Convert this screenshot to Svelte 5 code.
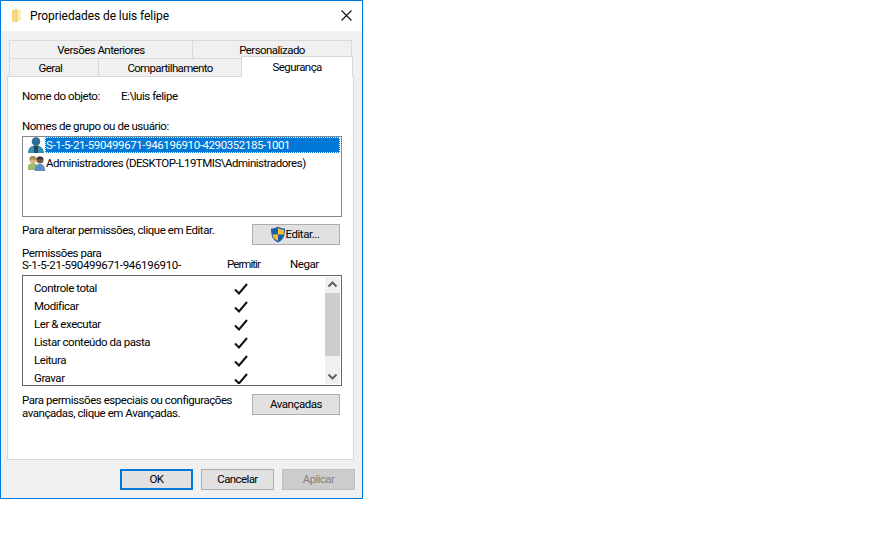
<script>
	const upper = ['Versões Anteriores', 'Personalizado']
	const perms = ['Controle total', 'Modificar', 'Ler & executar', 'Listar conteúdo da pasta', 'Leitura', 'Gravar']
</script>

<div class="window">
	<header class="title">
		<svg class="folder" width="16" height="16" viewBox="0 0 16 16">
			<path d="M2 2h2l1-1h2v13H3l-1-1z" fill="#f5d882" />
			<path d="M7 2h4v10l-4 2z" fill="#fdecb8" />
			<path d="M7 1v13" stroke="#ecca6c" stroke-width=".7" />
		</svg>
		<span>Propriedades de luis felipe</span>
		<svg class="close" width="11" height="11" viewBox="0 0 11 11">
			<path d="M.5.5l10 10M10.500.5l-10 10" stroke="#111" stroke-width="1.1" fill="none" />
		</svg>
	</header>

	<main class="body">
		<div class="tabs">
			<div class="tab-row back">
				{#each upper as t}
					<div class="tab">{t}</div>
				{/each}
			</div>
			<div class="tab-row front">
				<div class="tab geral">Geral</div>
				<div class="tab share">Compartilhamento</div>
				<div class="tab active">Segurança</div>
			</div>
		</div>

		<section class="panel">
			<div class="object">
				<span class="obj-label">Nome do objeto:</span>
				<span>E:\luis felipe</span>
			</div>

			<div class="group-label">Nomes de grupo ou de usuário:</div>
			<div class="listbox">
				<div class="user">
					<svg width="17" height="16" viewBox="0 0 17 16">
						<path d="M0 16c0-4 2-6.500 4.500-7h6c3 .5 5.500 3 5.500 7z" fill="#3a8db0" />
						<circle cx="8" cy="4.500" r="4.300" fill="#2c6f93" />
						<path d="M5.500 8.500h5L9.500 16h-3z" fill="#1c4a66" />
					</svg>
					<span class="name selected">S-1-5-21-590499671-946196910-4290352185-1001</span>
				</div>
				<div class="user">
					<svg width="17" height="16" viewBox="0 0 17 16">
						<circle cx="5" cy="4.500" r="3.600" fill="#d8b078" />
						<path d="M5 1c-2.500 0-3.500 1.500-3.500 3.500h7C8.500 2.500 7.500 1 5 1z" fill="#a88a52" />
						<path d="M-1 15c0-4 2-7 6-7s5 3 5 7z" fill="#9cbb6c" />
						<circle cx="12" cy="5" r="3.500" fill="#7a5a42" />
						<path d="M12 1.500c-2.200 0-3.500 1.200-3.500 3h7c0-1.800-1.300-3-3.500-3z" fill="#3d3a3a" />
						<path d="M6.500 16c0-4.500 2-7 5.500-7s5 2.500 5 7z" fill="#5b8dc2" />
					</svg>
					<span class="name admins">Administradores (DESKTOP-L19TMIS\Administradores)</span>
				</div>
			</div>

			<div class="action-row edit">
				<span class="hint">Para alterar permissões, clique em Editar.</span>
				<button class="btn side shielded">
					<svg width="16" height="17" viewBox="0 0 16 17">
						<path d="M8 .5c2 1.500 4.500 2 7 2 0 7-1.500 11.500-7 14-5.500-2.500-7-7-7-14 2.500 0 5-.5 7-2z" fill="#1b5fa8" />
						<path d="M8 2v6.500h5.600c.2-1.500.3-3 .2-4.700C11.800 3.700 9.700 3.200 8 2zM8 8.500H2.500C3 11.500 5 13.700 8 15z" fill="#f9c12e" />
					</svg>
					<span>Editar...</span>
				</button>
			</div>

			<div class="perm-head">
				<div class="perm-for">Permissões para<br /><span class="sid">S-1-5-21-590499671-946196910-</span></div>
				<span class="allow">Permitir</span>
				<span class="deny">Negar</span>
			</div>

			<div class="permbox">
				<div class="perm-list">
					{#each perms as p}
						<div class="perm">
							<span class="perm-name">{p}</span>
							<svg class="check" width="14" height="12" viewBox="0 0 14 12">
								<path d="M1 6.500l4 4L13 1" stroke="#111" stroke-width="2" fill="none" />
							</svg>
						</div>
					{/each}
				</div>
				<div class="scroll">
					<svg class="arrow" width="15" height="16" viewBox="0 0 15 16">
						<path d="M3.500 9.500l4-4 4 4" stroke="#606060" stroke-width="2" fill="none" />
					</svg>
					<div class="thumb"></div>
					<svg class="arrow" width="15" height="16" viewBox="0 0 15 16">
						<path d="M3.500 6.500l4 4 4-4" stroke="#606060" stroke-width="2" fill="none" />
					</svg>
				</div>
			</div>

			<div class="action-row adv">
				<span class="hint">Para permissões especiais ou configurações<br />avançadas, clique em Avançadas.</span>
				<button class="btn side">Avançadas</button>
			</div>
		</section>

		<footer class="footer">
			<button class="btn dlg default">OK</button>
			<button class="btn dlg">Cancelar</button>
			<button class="btn dlg off">Aplicar</button>
		</footer>
	</main>
</div>

<style>
	:global(body) {
		background: #fff;
	}
	.window {
		box-sizing: border-box;
		width: 363px;
		height: 499px;
		border: 1px solid #0078d7;
		display: flex;
		flex-direction: column;
		font: 11.5px/13px Roboto, "Liberation Sans", sans-serif;
		letter-spacing: -0.45px;
		color: #000;
	}
	.title {
		height: 30px;
		flex: none;
		display: flex;
		align-items: center;
		padding: 0 10px 0 9px;
		background: #fff;
		gap: 4px;
		font-size: 12px;
		letter-spacing: -0.08px;
	}
	.title span {
		flex: 1;
	}
	.close {
		margin-top: -1px;
	}
	.body {
		flex: 1;
		background: #f0f0f0;
		display: flex;
		flex-direction: column;
		padding: 9px 6px 0;
	}
	.tabs {
		margin-left: 2px;
		width: 343px;
		flex: none;
	}
	.tab-row {
		display: flex;
		height: 18px;
	}
	.tab {
		box-sizing: border-box;
		border: 1px solid #d9d9d9;
		border-bottom: 0;
		background: #f0f0f0;
		text-align: center;
		line-height: 19px;
		height: 18px;
		margin-right: -1px;
		letter-spacing: -0.55px;
	}
	.back .tab {
		width: 184px;
	}
	.back .tab:last-child {
		width: 160px;
		margin-right: 0;
	}
	.geral {
		width: 90px;
		padding-right: 7px;
	}
	.share {
		width: 145px;
		letter-spacing: -0.65px;
	}
	.active {
		width: 112px;
		height: 21px;
		margin-top: -2px;
		background: #fff;
		position: relative;
		z-index: 1;
		line-height: 20px;
	}
	.panel {
		box-sizing: border-box;
		width: 347px;
		height: 384px;
		flex: none;
		border: 1px solid #d9d9d9;
		background: #fff;
		padding: 0 11px 0 14px;
	}
	.object {
		display: flex;
		margin-top: 13px;
	}
	.obj-label {
		width: 99px;
	}
	.group-label {
		margin-top: 17px;
	}
	.listbox {
		box-sizing: border-box;
		width: 320px;
		height: 81px;
		margin-top: 3px;
		border: 1px solid #828790;
		padding: 0 0 0 5px;
	}
	.user {
		display: flex;
		align-items: flex-start;
		height: 18px;
	}
	.user svg {
		flex: none;
	}
	.name {
		line-height: 16px;
		padding-left: 1px;
		white-space: nowrap;
	}
	.admins {
		letter-spacing: -0.49px;
	}
	.selected {
		box-sizing: border-box;
		width: 295px;
		background: #0078d7;
		color: #fff;
		outline: 1px dotted #fff;
		outline-offset: -1px;
		letter-spacing: -0.4px;
	}
	.action-row {
		display: flex;
		justify-content: space-between;
		width: 318px;
	}
	.edit {
		margin-top: 7px;
	}
	.hint {
		display: block;
		white-space: nowrap;
	}
	.btn {
		box-sizing: border-box;
		border: 1px solid #adadad;
		background: #e1e1e1;
		font: inherit;
		letter-spacing: inherit;
		color: inherit;
		padding: 0;
		display: inline-flex;
		align-items: center;
		justify-content: center;
		flex: none;
	}
	.side {
		width: 88px;
		height: 21px;
	}
	.shielded {
		padding-right: 3px;
	}
	.perm-head {
		display: flex;
		margin-top: 2px;
		height: 24px;
	}
	.perm-for {
		width: 205px;
		line-height: 12px;
		white-space: nowrap;
	}
	.sid {
		letter-spacing: -0.32px;
	}
	.allow {
		width: 63px;
		align-self: flex-end;
		letter-spacing: -0.95px;
	}
	.deny {
		align-self: flex-end;
	}
	.permbox {
		box-sizing: border-box;
		display: flex;
		width: 320px;
		height: 111px;
		margin-top: 4px;
		border: 1px solid #666;
		padding: 1px;
		overflow: hidden;
	}
	.perm-list {
		flex: 1;
		padding-top: 2px;
		overflow: hidden;
	}
	.perm {
		display: flex;
		align-items: center;
		height: 18px;
		padding-left: 10px;
	}
	.perm-name {
		width: 200px;
	}
	.check {
		margin-top: 1px;
	}
	.scroll {
		width: 15px;
		background: #f0f0f0;
		display: flex;
		flex-direction: column;
	}
	.arrow {
		flex: none;
	}
	.thumb {
		height: 63px;
		flex: none;
		background: #cdcdcd;
	}
	.scroll .arrow:last-child {
		margin-top: auto;
	}
	.adv {
		margin-top: 8px;
	}
	.footer {
		display: flex;
		justify-content: flex-end;
		gap: 8px;
		margin-top: 9px;
		padding-right: 1px;
	}
	.dlg {
		width: 73px;
		height: 21px;
		letter-spacing: -0.6px;
	}
	.default {
		border: 2px solid #0078d7;
	}
	.off {
		background: #cccccc;
		border-color: #bfbfbf;
		color: #838383;
	}
</style>
